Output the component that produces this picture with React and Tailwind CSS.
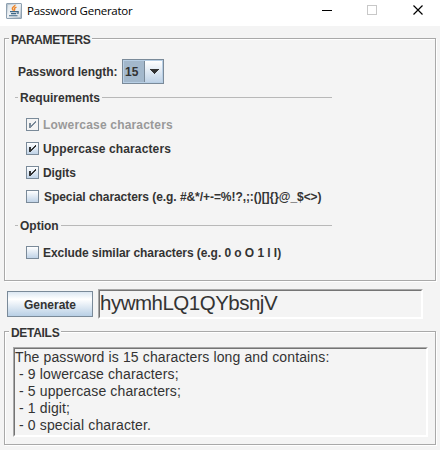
import React from "react";

function Etched({ title, titleClass, className, children }) {
  return (
    <section
      className={`relative border border-[#a9a9a9] shadow-[inset_1px_1px_0_#fff,1px_1px_0_#fff] ${className}`}
    >
      <h2 className={`absolute -top-[6px] left-1 h-[15px] bg-[#f4f4f4] pl-[2px] leading-[15px] ${titleClass}`}>
        {title}
      </h2>
      {children}
    </section>
  );
}

function Divider({ title, className }) {
  return (
    <div className={`flex h-[15px] items-center ${className}`}>
      <span className="h-px w-[3px] bg-[#b8b8b8]" />
      <span className="relative top-px mx-[2px] shrink-0 leading-[15px]">{title}</span>
      <span className="h-px flex-1 bg-[#b8b8b8]" />
    </div>
  );
}

function Check({ checked, disabled, label, labelClass = "ml-1" }) {
  return (
    <div className={`flex h-6 items-start ${disabled ? "text-[#999999]" : ""}`}>
      <span
        className={`mt-[6px] h-[13px] w-[13px] shrink-0 border border-[#7a8a99] ${
          disabled ? "" : "bg-linear-to-b from-white to-[#c0d3e7]"
        }`}
      >
        {checked && (
          <svg
            width="11"
            height="11"
            viewBox="0 0 11 11"
            shapeRendering="crispEdges"
            fill={disabled ? "#7a8a99" : "#333333"}
          >
            <path d="M2 4h2v5H2zM8 2h1v2H8zM7 3h1v2H7zM6 4h1v2H6zM5 5h1v2H5zM4 6h1v2H4z" />
          </svg>
        )}
      </span>
      <span className={`mt-[6px] whitespace-pre leading-[15px] ${labelClass}`}>{label}</span>
    </div>
  );
}

function JavaIcon() {
  return (
    <svg width="16" height="16" viewBox="0 0 16 16" fill="none">
      <defs>
        <linearGradient id="tile" x1="0" y1="0" x2="1" y2="1">
          <stop stopColor="#a9b8c4" />
          <stop offset=".45" stopColor="#f0f3f6" />
          <stop offset="1" stopColor="#a3b2bf" />
        </linearGradient>
      </defs>
      <rect x=".5" y=".5" width="15" height="15" rx=".5" fill="url(#tile)" stroke="#8fa1b1" />
      <path d="M2 2h12v12H2z" fill="#eef2f5" opacity=".7" />
      <path d="M9 1.800C9.500 3.500 5.800 3.800 6.300 5.800c.2.700 1 .9 1 1.900M10.500 4.200c-2 .6-2.500 1.300-1.900 2.100.4.500 0 1-.4 1.400" stroke="#ee8426" strokeWidth="1.400" />
      <path d="M4 8.600h6.500M5 10.600h5M3 12.700h8.500M10.500 8.600h1.700v1.600h-1.500" stroke="#3f6786" strokeWidth="1.100" />
    </svg>
  );
}

const details = [
  "The password is 15 characters long and contains:",
  " - 9 lowercase characters;",
  " - 5 uppercase characters;",
  " - 1 digit;",
  " - 0 special character.",
];

export default function App() {
  return (
    <main className="flex h-[450px] w-[440px] flex-col overflow-hidden bg-[#f4f4f4] font-['Liberation_Sans',Arial,sans-serif] text-[12px] font-bold text-[#333333]">
      <header className="flex h-[26px] shrink-0 items-center bg-white pl-[6px] pr-[16px] pb-[5px] font-['Open_Sans','Noto_Sans',sans-serif] font-normal text-black">
        <JavaIcon />
        <span className="ml-[5px] mt-px text-[11.5px] leading-5 tracking-[-0.25px]">Password Generator</span>
        <svg className="ml-auto" width="102" height="12" viewBox="0 0 102 12" shapeRendering="crispEdges" fill="none">
          <path d="M0 5.500h10" stroke="#000" />
          <path d="M45.500 .5h9v9h-9z" stroke="#c8c8c8" />
          <path d="M91.500 .5l9 9m0-9l-9 9" stroke="#000" strokeWidth="1.200" shapeRendering="auto" />
        </svg>
      </header>

      <Etched title="PARAMETERS" titleClass="w-[83px] tracking-[-0.38px]" className="ml-1 mt-3 h-[243px] w-[432px] shrink-0 pl-[10px] pt-[20px]">
        <div className="flex h-[25px] items-center pl-[3px]">
          <span className="w-[104px] pt-px leading-[15px] tracking-[-0.03px]">Password length:</span>
          <div className="flex h-[25px] w-[42px] border border-[#7a8a99] bg-[#b8cfe5] p-px">
            <span className="w-[20px] bg-[#a3b8cc] pl-px leading-[22px] tracking-[0.2px]">15</span>
            <span className="flex flex-1 items-center justify-center border-l border-[#7a8a99] bg-linear-to-b from-white to-[#c0d3e7]">
              <svg width="10" height="5" viewBox="0 0 10 5" shapeRendering="crispEdges">
                <path d="M0 0h10L5 5z" fill="#333333" />
              </svg>
            </span>
          </div>
        </div>
        <Divider title="Requirements" className="mt-[6px] w-[317px]" />
        <div className="mt-[7px] pl-[11px]">
          <Check checked disabled label="Lowercase characters" labelClass="ml-1 tracking-[0.19px]" />
          <Check checked label="Uppercase characters" labelClass="ml-1 tracking-[0.13px]" />
          <Check checked label="Digits" labelClass="ml-1 tracking-[-0.1px]" />
          <Check label="Special characters (e.g. #&*/+-=%!?,;:()[]{}@_$<>)" labelClass="ml-[5px] tracking-[-0.06px]" />
        </div>
        <Divider title="Option" className="mt-[10px] w-[317px]" />
        <div className="mt-[7px] pl-[11px]">
          <Check label="Exclude similar characters (e.g. 0 o O 1 l I)" labelClass="ml-1 tracking-[-0.06px]" />
        </div>
      </Etched>

      <div className="mt-2 flex h-[30px] shrink-0 items-start pl-[7px]">
        <button className="mt-[2px] h-[26px] w-[86px] border border-[#7a8a99] bg-linear-to-b from-[#dce7f2] via-white via-30% to-[#b8cfe5] pt-px text-[12px] leading-6 font-bold">
          Generate
        </button>
        <div className="ml-[5px] h-[30px] w-[325px] border border-t-[#a9a9a9] border-r-white border-b-white border-l-[#a9a9a9]">
          <div className="h-[28px] border border-t-[#747474] border-r-white border-b-white border-l-[#747474] text-[20.5px] leading-[24px] font-normal tracking-[-0.5px]">
            hywmhLQ1QYbsnjV
          </div>
        </div>
      </div>

      <Etched title="DETAILS" titleClass="w-[52px] tracking-[-0.3px]" className="ml-1 mt-3 h-[114px] w-[432px] shrink-0 pl-2 pt-[15px]">
        <div className="h-[90px] w-[415px] border border-t-[#a9a9a9] border-r-white border-b-white border-l-[#a9a9a9]">
          <div className="h-[88px] border border-t-[#747474] border-r-white border-b-white border-l-[#747474] text-[14px] leading-[17px] font-normal tracking-[0.13px]">
            {details.map((line) => (
              <p key={line} className="whitespace-pre">{line}</p>
            ))}
          </div>
        </div>
      </Etched>
    </main>
  );
}
